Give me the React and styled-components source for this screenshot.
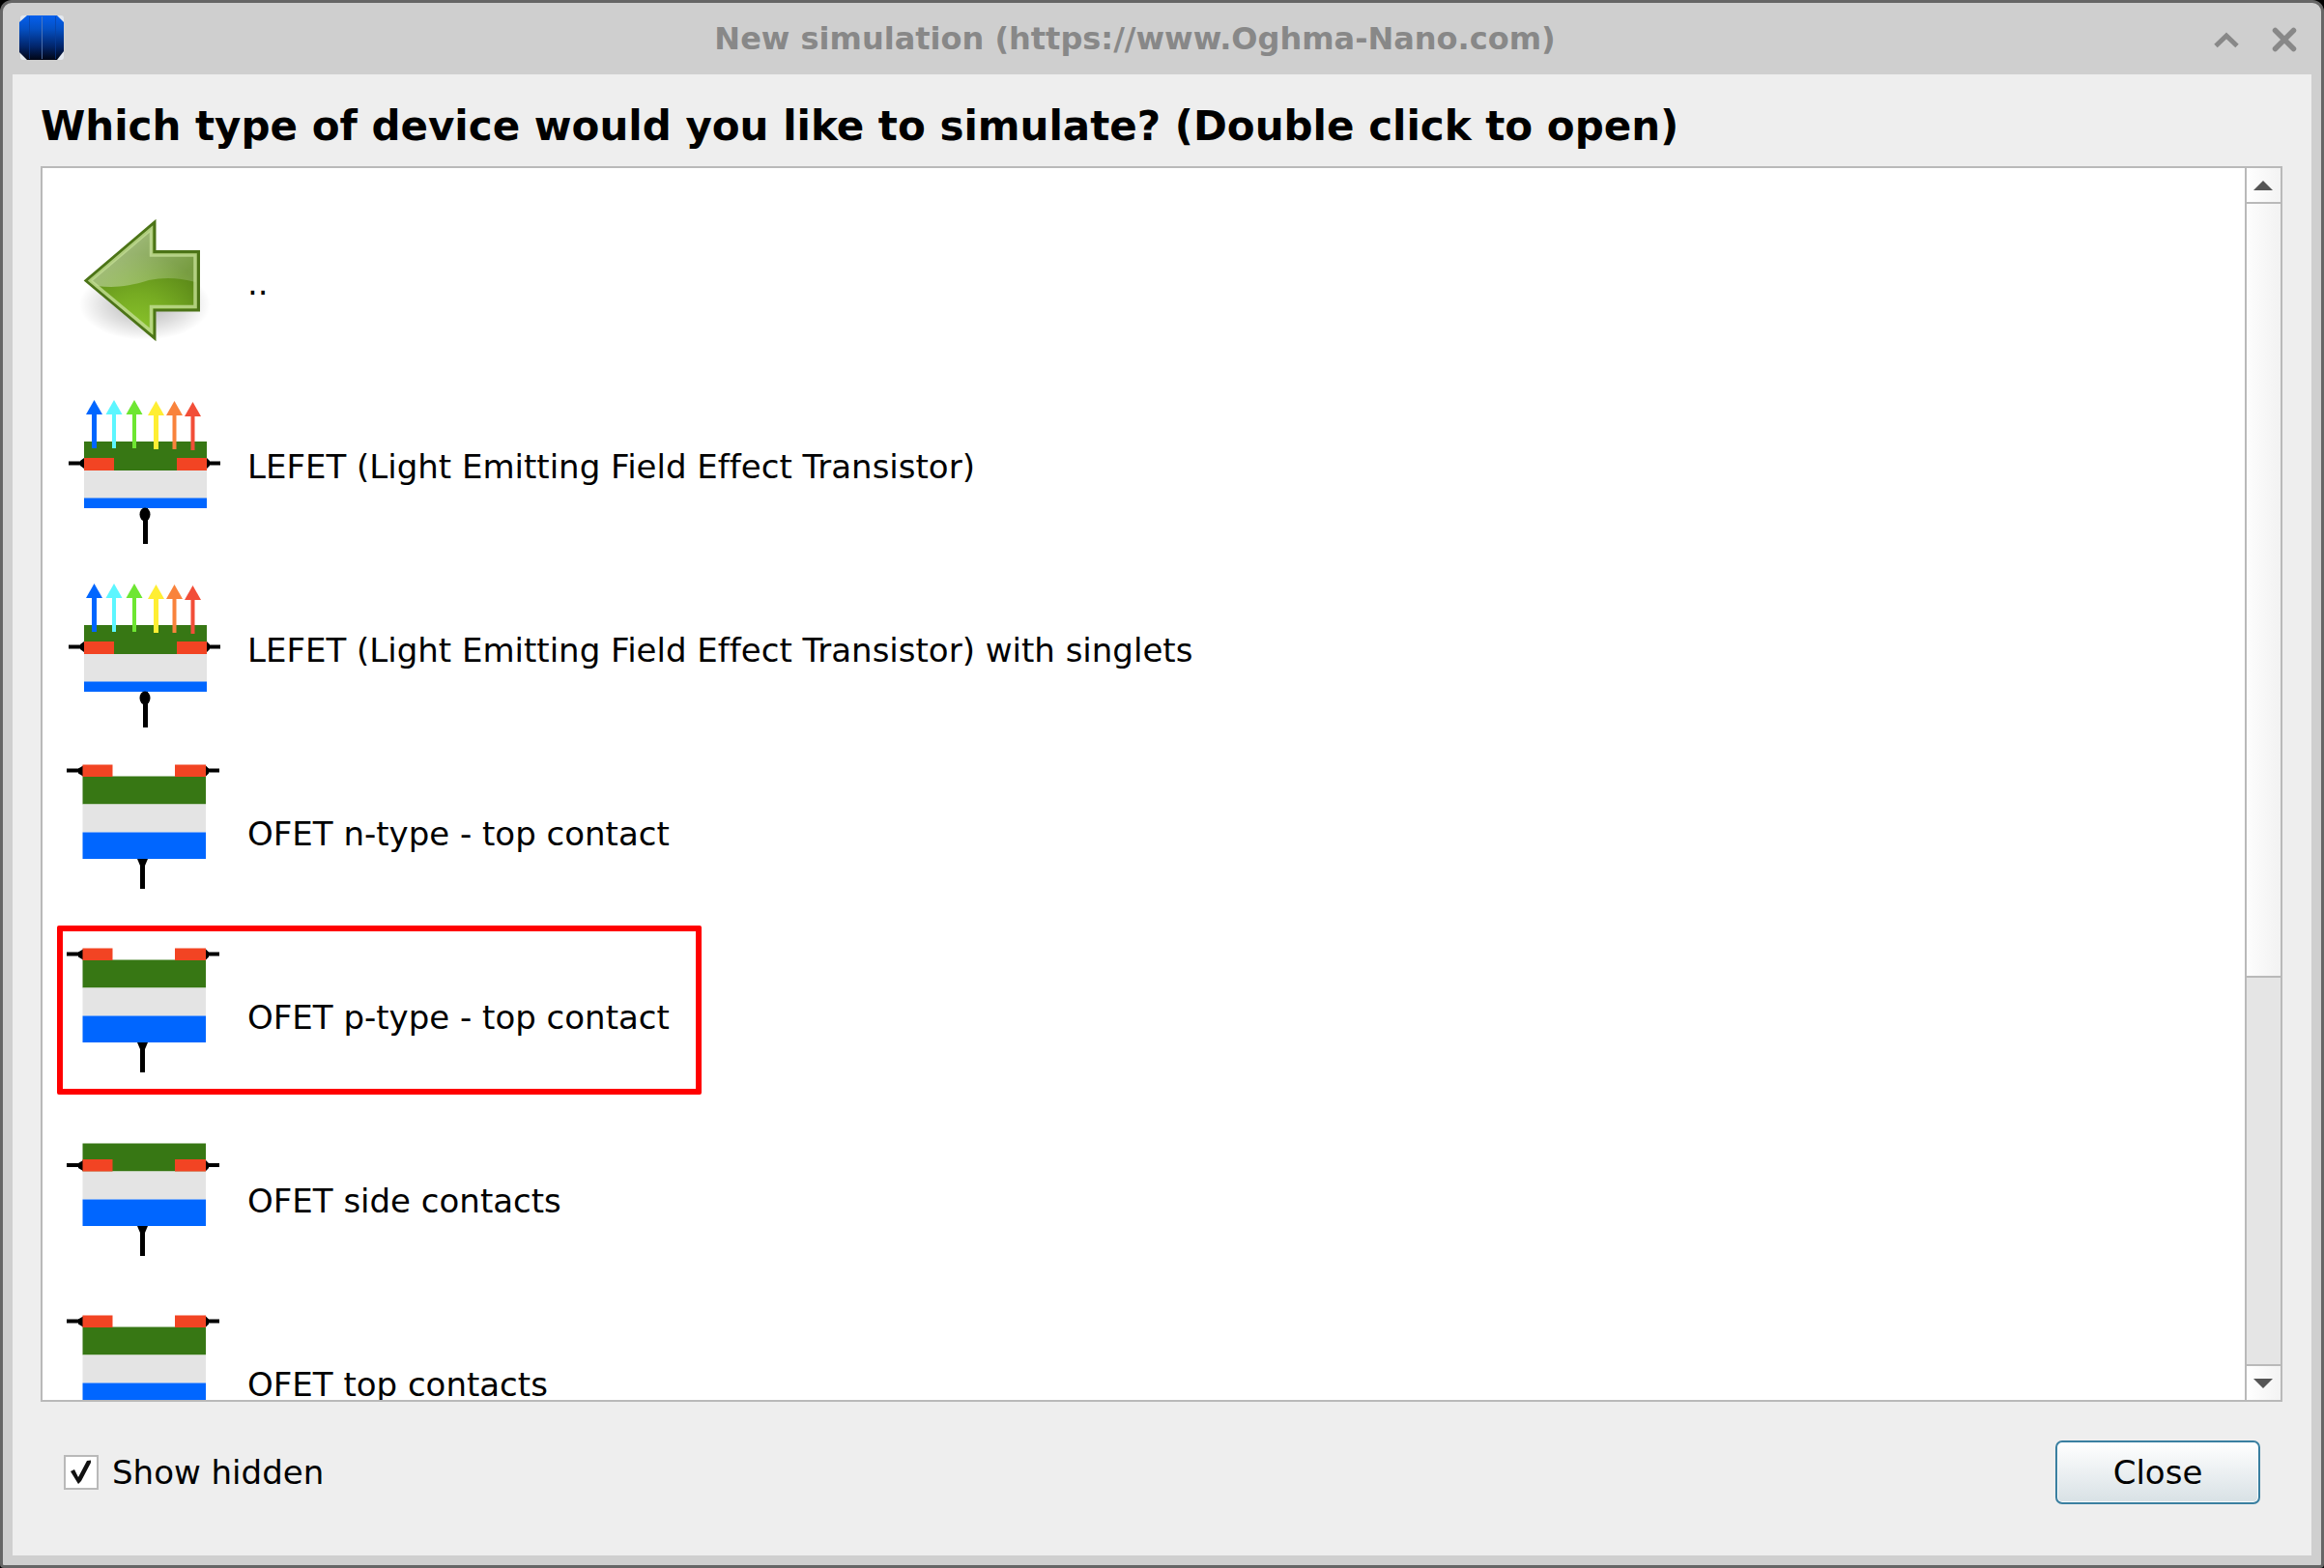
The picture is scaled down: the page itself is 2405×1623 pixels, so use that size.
import React, { useState } from 'react';
import styled, { createGlobalStyle } from 'styled-components';

// constants
const COLORS = {
  FRAME: '#cfcfcf',
  PANEL: '#eeeeee',
  LINE: '#b9b9b9',
  DISABLED: '#888888',
  SEMICONDUCTOR: '#377714',
  CONTACT: '#f24423',
  INSULATOR: '#e4e4e4',
  GATE: '#0066ff',
  HIGHLIGHT: '#ff0000',
};

const GlobalStyle = createGlobalStyle`
  * {
    box-sizing: border-box;
  }

  body {
    margin: 0;
    background: #000000;
    font-family: "DejaVu Sans", sans-serif;
    font-size: 34px;
    font-variant-ligatures: none;
    color: #000000;
  }

  button {
    padding: 0;
    border: 0;
    background: none;
    font: inherit;
    font-variant-ligatures: none;
    color: inherit;
  }
`;

const Window = styled.div`
  display: flex;
  flex-direction: column;
  height: 100vh;
  border: 3px solid #666666;
  border-radius: 12px 12px 4px 4px;
  background: ${COLORS.FRAME};
  overflow: hidden;
`;

const TitleBar = styled.header`
  display: flex;
  align-items: center;
  flex: none;
  height: 74px;
  padding: 0 24px 0 16px;
`;

const Title = styled.div`
  flex: 1;
  padding-right: 8px;
  text-align: center;
  font-size: 32px;
  font-weight: bold;
  color: ${COLORS.DISABLED};
`;

const TitleButtons = styled.div`
  display: flex;
  gap: 32px;

  button {
    display: flex;
    color: ${COLORS.DISABLED};
  }
`;

const Panel = styled.main`
  display: flex;
  flex-direction: column;
  flex: 1;
  min-height: 0;
  margin: 0 10px 10px;
  padding: 27px 30px 53px 29px;
  background: ${COLORS.PANEL};
`;

const Question = styled.h1`
  margin: 0 0 14px;
  font-size: 42px;
  line-height: 54px;
`;

const ListFrame = styled.div`
  display: flex;
  flex: 1;
  min-height: 0;
  border: 2px solid ${COLORS.LINE};
  background: #ffffff;
`;

const DeviceList = styled.ul`
  flex: 1;
  margin: 0;
  padding: 24px 22px 0;
  list-style: none;
  overflow: hidden;
`;

const DeviceButton = styled.button`
  position: relative;
  display: flex;
  align-items: center;
  gap: 22px;
  height: 190px;
  white-space: nowrap;

  &::after {
    content: '';
    display: ${({ $marked }) => ($marked ? 'block' : 'none')};
    position: absolute;
    inset: 0 -33px 15px -7px;
    border: 6px solid ${COLORS.HIGHLIGHT};
    border-radius: 2px;
  }
`;

const ScrollBar = styled.div`
  display: flex;
  flex-direction: column;
  width: 37px;
  border-left: 2px solid ${COLORS.LINE};
  background: #e5e5e5;
`;

const ScrollArrow = styled.button`
  display: flex;
  align-items: center;
  justify-content: center;
  flex: none;
  height: 35px;
  padding-right: 2px;
  background: linear-gradient(90deg, #ffffff, #f3f3f3);
`;

const ScrollTrack = styled.div`
  flex: 1;
  border: solid ${COLORS.LINE};
  border-width: 2px 0;
`;

const ScrollThumb = styled.div`
  height: 801px;
  max-height: 67%;
  border-bottom: 2px solid ${COLORS.LINE};
  background: linear-gradient(90deg, #fdfdfd, #f2f2f2);
`;

const Footer = styled.footer`
  display: flex;
  align-items: center;
  justify-content: space-between;
  flex: none;
  margin-top: 40px;
  padding: 0 23px 0 24px;
`;

const CheckLabel = styled.label`
  display: flex;
  align-items: center;
  gap: 14px;
`;

const CheckBox = styled.input`
  appearance: none;
  width: 36px;
  height: 36px;
  margin: 0;
  border: 2px solid ${COLORS.LINE};
  background: #ffffff;

  &:checked {
    background-image: url("data:image/svg+xml,%3Csvg xmlns='http://www.w3.org/2000/svg' viewBox='0 0 32 32'%3E%3Cpath d='M5 15L9 13L13 21L22 4L26 3.500L26 6L16 25L13 28Z' fill='%23111'/%3E%3C/svg%3E");
  }
`;

const CloseButton = styled.button`
  && {
    width: 212px;
    height: 66px;
    border: 2px solid #3a7fa0;
    border-radius: 7px;
    background: linear-gradient(#ffffff, #d8e1e5);
    box-shadow: inset 0 0 0 1px #f4fafc;
  }
`;

const AppLogo = () => (
  <svg width="48" height="48" viewBox="0 0 48 48" aria-hidden="true">
    <defs>
      <linearGradient id="logoFill" x1="0" y1="0" x2="0" y2="1">
        <stop offset="0" stopColor="#0560ee" />
        <stop offset="0.3" stopColor="#0450c4" />
        <stop offset="0.7" stopColor="#02256a" />
        <stop offset="1" stopColor="#010514" />
      </linearGradient>
    </defs>
    <rect x="2" y="0" width="45" height="46" rx="3" fill="#e4e8ee" />
    <path d="M9 0H40L47 7V37L40 46H9L1 38V7Z" fill="url(#logoFill)" />
    <path d="M24.500 1V45" stroke="#5d7fb8" strokeWidth="1" opacity="0.8" />
    <path d="M11.500 1V45M38.500 1V45" stroke="#0a3f9c" strokeWidth="1" opacity="0.6" />
  </svg>
);

const BackIcon = () => (
  <svg width="168" height="168" viewBox="0 0 168 168" aria-hidden="true">
    <defs>
      <radialGradient id="backShadow">
        <stop offset="0" stopColor="#000" stopOpacity="0.3" />
        <stop offset="0.6" stopColor="#000" stopOpacity="0.13" />
        <stop offset="1" stopColor="#000" stopOpacity="0" />
      </radialGradient>
      <radialGradient id="backFill" gradientUnits="userSpaceOnUse" cx="76" cy="136" r="82">
        <stop offset="0" stopColor="#8cc62c" />
        <stop offset="0.5" stopColor="#76ab22" />
        <stop offset="1" stopColor="#5a8718" />
      </radialGradient>
      <linearGradient id="backGloss" x1="0" y1="0" x2="1" y2="0.6">
        <stop offset="0" stopColor="#fff" stopOpacity="0.55" />
        <stop offset="1" stopColor="#fff" stopOpacity="0.18" />
      </linearGradient>
    </defs>
    <ellipse cx="84" cy="106" rx="68" ry="37" fill="url(#backShadow)" />
    <path d="M23 81.500L94 21V51.500H139.500V112H94V141Z" fill="url(#backFill)" stroke="#4c7417" strokeWidth="3" />
    <path d="M28 81.500L91 28V54.500H136.500V83C118 78 103 78 88 81C66 88 52 89 34 87Z" fill="url(#backGloss)" />
    <path d="M27.500 81.500L90.500 28V55H136V108.500H90.500V134Z" fill="none" stroke="#c3dd95" strokeWidth="3.500" opacity="0.8" />
  </svg>
);

const RAYS = [
  { x: 31.5, y: 15, width: 5, color: '#0066ff' },
  { x: 52, y: 15, width: 4, color: '#5cf6ff' },
  { x: 73, y: 15, width: 4, color: '#6ee632' },
  { x: 95.5, y: 16, width: 5, color: '#ffee33' },
  { x: 114.5, y: 16, width: 4, color: '#f9833c' },
  { x: 133.5, y: 17, width: 4, color: '#f24e38' },
];

const LefetIcon = () => (
  <svg width="168" height="168" viewBox="0 0 168 168" aria-hidden="true">
    <rect x="21" y="58" width="127" height="30" fill={COLORS.SEMICONDUCTOR} />
    <rect x="21" y="88" width="127" height="29" fill={COLORS.INSULATOR} />
    <rect x="21" y="116.500" width="127" height="10.500" fill={COLORS.GATE} />
    <path d="M5 80.500H20M148 80.500H162" stroke="#000" strokeWidth="4" />
    <path d="M21 75L17 78V83L21 86ZM148 75L151 78V83L148 86Z" />
    <rect x="21" y="75" width="31" height="13" fill={COLORS.CONTACT} />
    <rect x="117" y="75" width="31" height="13" fill={COLORS.CONTACT} />
    <path d="M84.500 127V164" stroke="#000" strokeWidth="5" />
    <ellipse cx="84" cy="133.500" rx="5.500" ry="7" />
    {
      RAYS.map(({ x, y, width, color }) =>
        <g key={x} fill={color}>
          <path d={`M${x} ${y}L${x + 8.5} ${y + 15}H${x - 8.5}Z`} />
          <rect x={x - width / 2} y={y + 13} width={width} height={37} />
        </g>
      )
    }
  </svg>
);

const OfetIcon = ({ side }) => {
  const contactY = side ? 41 : 12.5;

  return (
    <svg width="168" height="168" viewBox="0 0 168 168" aria-hidden="true">
      <rect x="19.500" y="24.500" width="127.500" height="29" fill={COLORS.SEMICONDUCTOR} />
      <rect x="19.500" y="53.500" width="127.500" height="29" fill={COLORS.INSULATOR} />
      <rect x="19.500" y="82.500" width="127.500" height="27.500" fill={COLORS.GATE} />
      <path d={`M3 ${contactY + 6}H18M148 ${contactY + 6}H161`} stroke="#000" strokeWidth="4" />
      <path d={`M20 ${contactY + 1}l-5 3v5l5 3ZM147 ${contactY + 1}l3 3v5l-3 3Z`} />
      <rect x="19.500" y={contactY} width="31" height="12.500" fill={COLORS.CONTACT} />
      <rect x="115" y={contactY} width="32" height="12.500" fill={COLORS.CONTACT} />
      <path d="M81.500 110V141" stroke="#000" strokeWidth="5" />
      <path d="M76 110H87L84 117H79Z" />
    </svg>
  );
};

const DEVICES = [
  { name: '..', icon: <BackIcon /> },
  { name: 'LEFET (Light Emitting Field Effect Transistor)', icon: <LefetIcon /> },
  { name: 'LEFET (Light Emitting Field Effect Transistor) with singlets', icon: <LefetIcon /> },
  { name: 'OFET n-type - top contact', icon: <OfetIcon /> },
  { name: 'OFET p-type - top contact', icon: <OfetIcon />, marked: true },
  { name: 'OFET side contacts', icon: <OfetIcon side /> },
  { name: 'OFET top contacts', icon: <OfetIcon /> },
];

export default function App() {
  const [showHidden, setShowHidden] = useState(true);

  return (
    <>
      <GlobalStyle />
      <Window>
        <TitleBar>
          <AppLogo />
          <Title>New simulation (https://www.Oghma-Nano.com)</Title>
          <TitleButtons>
            <button type="button" aria-label="Shade">
              <svg width="28" height="28" viewBox="0 0 28 28" fill="none" stroke="currentColor" strokeWidth="5">
                <path d="M3 21.500L14 11L25 21.500" />
              </svg>
            </button>
            <button type="button" aria-label="Close window">
              <svg width="28" height="28" viewBox="0 0 28 28" fill="none" stroke="currentColor" strokeWidth="5.500" strokeLinecap="round">
                <path d="M4.500 5.500L23.500 24.500M23.500 5.500L4.500 24.500" />
              </svg>
            </button>
          </TitleButtons>
        </TitleBar>
        <Panel>
          <Question>Which type of device would you like to simulate? (Double click to open)</Question>
          <ListFrame>
            <DeviceList>
              {
                DEVICES.map(({ name, icon, marked }) =>
                  <li key={name}>
                    <DeviceButton type="button" $marked={marked}>
                      {icon}
                      <span>{name}</span>
                    </DeviceButton>
                  </li>
                )
              }
            </DeviceList>
            <ScrollBar>
              <ScrollArrow type="button" aria-label="Scroll up">
                <svg width="20" height="10" viewBox="0 0 20 10" fill="#555">
                  <path d="M0 10L10 0L20 10Z" />
                </svg>
              </ScrollArrow>
              <ScrollTrack>
                <ScrollThumb />
              </ScrollTrack>
              <ScrollArrow type="button" aria-label="Scroll down">
                <svg width="20" height="10" viewBox="0 0 20 10" fill="#555">
                  <path d="M0 0L10 10L20 0Z" />
                </svg>
              </ScrollArrow>
            </ScrollBar>
          </ListFrame>
          <Footer>
            <CheckLabel>
              <CheckBox
                type="checkbox"
                checked={showHidden}
                onChange={(e) => setShowHidden(e.target.checked)}
              />
              Show hidden
            </CheckLabel>
            <CloseButton type="button">Close</CloseButton>
          </Footer>
        </Panel>
      </Window>
    </>
  )
}
